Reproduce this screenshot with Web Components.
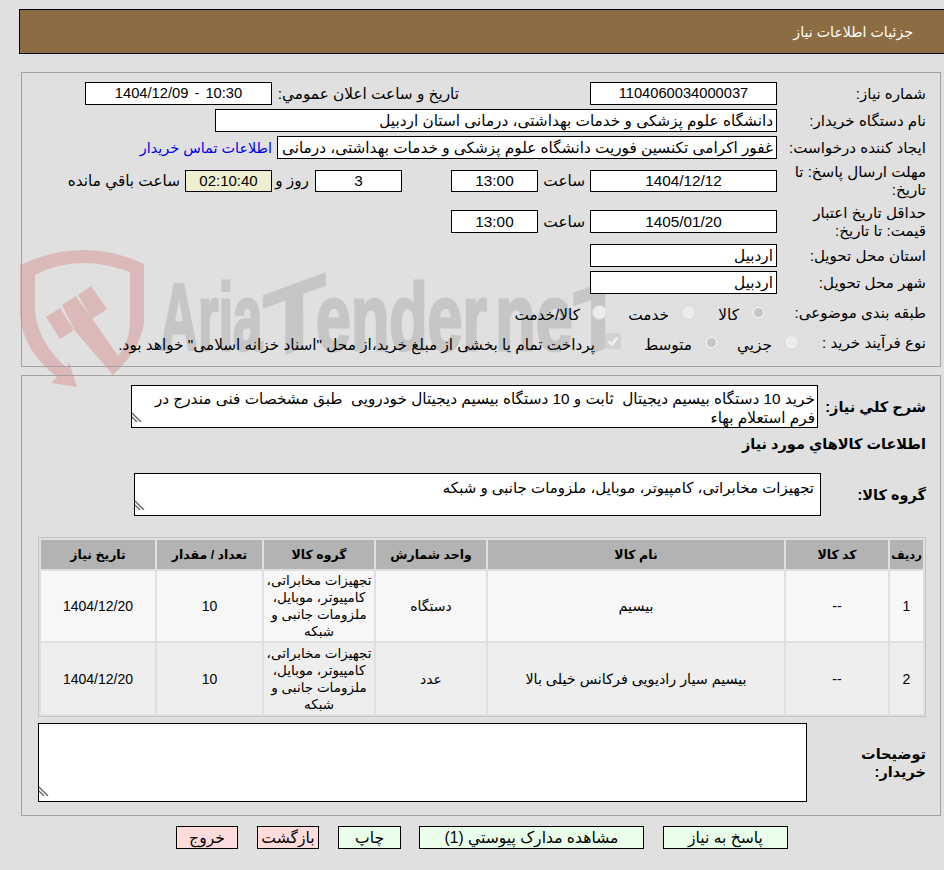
<!DOCTYPE html>
<html dir="rtl" lang="fa">
<head>
<meta charset="utf-8">
<title>جزئیات اطلاعات نیاز</title>
<style>
    html { margin: 0; padding: 0; background: #e0e0e0; overflow: hidden; }
    body { margin: 0; padding: 0; font-family: "Liberation Sans", "DejaVu Sans", sans-serif; font-size: 15.3px; color: #000; }
</style>
</head>
<body>
<tender-page>
    <tender-header>جزئیات اطلاعات نیاز</tender-header>

    <tender-panel style="--top:18px; --pad-bottom:11px">
        <tender-row label="شماره نیاز:" style="--h:23px; --gap:4px">
            <tender-field center style="--w:187px; --fs:14.7px">1104060034000037</tender-field>
            <tender-text style="margin-right:131px; width:187px">تاریخ و ساعت اعلان عمومي:</tender-text>
            <tender-field center style="--w:187px; --fs:14.7px; word-spacing:2px">10:30 - 1404/12/09</tender-field>
        </tender-row>
        <tender-row label="نام دستگاه خریدار:" style="--h:23px; --gap:4px">
            <tender-field style="--w:562px">دانشگاه علوم پزشکی و خدمات بهداشتی، درمانی استان اردبیل</tender-field>
        </tender-row>
        <tender-row label="ایجاد کننده درخواست:" style="--h:23px; --gap:6px">
            <tender-field style="--w:500px">غفور اکرامی تکنسین فوریت دانشگاه علوم پزشکی و خدمات بهداشتی، درمانی</tender-field>
            <tender-text style="margin-right:5px; color:#0000ee; font-size:14.4px">اطلاعات تماس خریدار</tender-text>
        </tender-row>
        <tender-row label="مهلت ارسال پاسخ: تا تاریخ:" style="--h:32px; --gap:8px">
            <tender-field center style="--w:187px; --fh:22px">1404/12/12</tender-field>
            <tender-text style="margin-right:5px; width:47px">ساعت</tender-text>
            <tender-field center style="--w:87px; --fh:22px">13:00</tender-field>
            <tender-text style="width:49px"></tender-text>
            <tender-field center style="--w:87px; --fh:22px">3</tender-field>
            <tender-text style="margin-right:6px; width:37px">روز و</tender-text>
            <tender-field center style="--w:87px; --fh:22px; --bg:#eeeed0; --fs:15px">02:10:40</tender-field>
            <tender-text style="margin-right:5px">ساعت باقي مانده</tender-text>
        </tender-row>
        <tender-row label="حداقل تاریخ اعتبار قیمت: تا تاریخ:" style="--h:33px; --gap:6px">
            <tender-field center style="--w:187px">1405/01/20</tender-field>
            <tender-text style="margin-right:5px; width:47px">ساعت</tender-text>
            <tender-field center style="--w:87px">13:00</tender-field>
        </tender-row>
        <tender-row label="استان محل تحویل:" style="--h:23px; --gap:4px">
            <tender-field style="--w:187px">اردبیل</tender-field>
        </tender-row>
        <tender-row label="شهر محل تحویل:" style="--h:23px; --gap:6px">
            <tender-field style="--w:187px">اردبیل</tender-field>
        </tender-row>
        <tender-row label="طبقه بندی موضوعی:" style="--h:25px; --gap:5px">
            <tender-choice checked style="--w:70px; margin-right:11px">کالا</tender-choice>
            <tender-choice style="--w:89px">خدمت</tender-choice>
            <tender-choice style="--w:90px">کالا/خدمت</tender-choice>
        </tender-row>
        <tender-row label="نوع فرآیند خرید :" style="--h:25px; --gap:0px; --label:127px">
            <tender-choice style="--w:80px">جزيي</tender-choice>
            <tender-choice checked style="--w:98px">متوسط</tender-choice>
            <tender-choice box>پرداخت تمام یا بخشی از مبلغ خرید،از محل "اسناد خزانه اسلامی" خواهد بود.</tender-choice>
        </tender-row>
    </tender-panel>

    <tender-panel style="--top:8px; --pad-bottom:13px">
        <tender-row strong label="شرح کلي نياز:" style="--h:43px; --gap:4px; --label:108px">
            <tender-note style="--w:687px; --nh:43px">خرید 10 دستگاه بیسیم دیجیتال&nbsp; ثابت و 10 دستگاه بیسیم دیجیتال خودرویی&nbsp; طبق مشخصات فنی مندرج در فرم استعلام بهاء</tender-note>
        </tender-row>
        <tender-row strong label="اطلاعات کالاهاي مورد نياز" style="--h:23px; --gap:18px; --label:400px"></tender-row>
        <tender-row strong label="گروه کالا:" style="--h:43px; --gap:21px; --label:105px">
            <tender-note inset style="--w:687px; --nh:43px; font-size:15px">تجهیزات مخابراتی، کامپیوتر، موبایل، ملزومات جانبی و شبکه</tender-note>
        </tender-row>
        <tender-table></tender-table>
        <tender-row strong label="توضیحات خریدار:" style="--h:79px; --gap:0px; --label:119px; margin-top:6px">
            <tender-note style="--w:769px; --nh:79px"></tender-note>
        </tender-row>
    </tender-panel>

    <tender-actions>
        <tender-button>پاسخ به نیاز</tender-button>
        <tender-button style="--w:225px">مشاهده مدارک پیوستي (1)</tender-button>
        <tender-button style="--w:63px; margin-right:-1px">چاپ</tender-button>
        <tender-button red style="--w:62px">بازگشت</tender-button>
        <tender-button red style="--w:62px">خروج</tender-button>
    </tender-actions>
</tender-page>

<script>
// base class: shadow root + style + markup
class TenderElement extends HTMLElement {
    constructor(){
        super();
        this.shadow = this.attachShadow({mode: "open"});
    }
    connectedCallback(){
        this.render();
    }
}

class TenderPage extends TenderElement {
    render(){
        this.shadow.innerHTML = `
        <style>
            :host { display: block; position: relative; width: 944px; height: 870px; overflow: hidden; padding-top: 9px; box-sizing: border-box; }
            svg { position: absolute; left: 0; top: 0; z-index: -1; }
            .word { font-family: "Liberation Sans", sans-serif; font-weight: 700; font-size: 94px; fill: #c6c6c6; stroke: #c6c6c6; stroke-width: 3px; }
        </style>
        <svg width="944" height="870" viewBox="0 0 944 870" direction="ltr">
            <path fill="#dcb9b9" fill-rule="evenodd" d="M20 265 Q52 250 83 250 Q115 250 144 264 L144 323 Q140 350 113 375 L108 368 Q131 345 130 320 L130 272 Q105 263 83 263 Q58 263 35 275 L35 313 Q40 345 67 368 L69 362 L77 387 L51 383 L57 377 Q22 350 20 313 Z"/>
            <path fill="#dcb9b9" d="M46 317 L60 308 L74 330 L60 339 Z M62 305 L76 296 L93 320 L121 360 L113 375 L75 331 Z M78 295 L91 286 L107 309 L92 319 Z"/>
            <text class="word" transform="translate(160 350) scale(.56 1)">Aria</text>
            <text class="word" transform="translate(294 350) skewY(-20) scale(1.08 1) translate(-28.5 0)">T</text>
            <text class="word" transform="translate(316 350) scale(.668 1)">ender</text>
            <text class="word" transform="translate(495 350) scale(.71 1)">ne</text>
            <text class="word" transform="translate(598 350) skewY(-20) scale(.85 1) translate(-28.5 0)">T</text>
        </svg>
        <slot></slot>`;
    }
}

class TenderHeader extends TenderElement {
    render(){
        this.shadow.innerHTML = `
        <style>
            :host { display: flex; align-items: center; box-sizing: border-box; height: 45px; margin-left: 19px; padding-right: 31px;
                background: #8c6c42; color: #fff; border: 1px solid #000; border-right: 0; font-size: 14.2px; }
        </style>
        <slot></slot>`;
    }
}

class TenderPanel extends TenderElement {
    render(){
        this.shadow.innerHTML = `
        <style>
            :host { display: flex; flex-direction: column; box-sizing: border-box; width: 920px; margin-right: 3px; margin-top: var(--top, 0);
                padding: 9px 0 var(--pad-bottom, 10px) 0; border: 1px solid #a0a0a0; }
        </style>
        <slot></slot>`;
    }
}

class TenderRow extends TenderElement {
    render(){
        const strong = this.hasAttribute("strong");
        this.shadow.innerHTML = `
        <style>
            :host { display: flex; align-items: center; height: var(--h, 23px); margin-bottom: var(--gap, 4px); padding-right: 14px; flex: none; }
            .label { box-sizing: border-box; flex: none; width: var(--label, 149px); padding-left: 5px; line-height: 18px;
                font-weight: ${strong ? 700 : 400}; font-size: ${strong ? "14.5px" : "15.1px"}; }
        </style>
        <div class="label">${this.getAttribute("label")}</div>
        <slot></slot>`;
    }
}

class TenderField extends TenderElement {
    render(){
        this.shadow.innerHTML = `
        <style>
            :host { display: block; box-sizing: border-box; flex: none; width: var(--w); height: var(--fh, 23px); margin-top: 0; font-size: var(--fs, 15.3px);
                padding: 0 3px; background: var(--bg, #fff); border: 1px solid #000; white-space: nowrap; overflow: hidden; text-align: ${this.hasAttribute("center") ? "center" : "right"}; }
            .in { line-height: calc(var(--fh, 23px) - 2px); display: block; }
        </style>
        <span class="in"><slot></slot></span>`;
    }
}

class TenderText extends TenderElement {
    render(){
        this.shadow.innerHTML = `
        <style>
            :host { display: block; flex: none; white-space: nowrap; }
        </style>
        <slot></slot>`;
    }
}

class TenderChoice extends TenderElement {
    render(){
        const box = this.hasAttribute("box");
        const on = this.hasAttribute("checked");
        const mark = box
            ? `<svg class="box" width="16" height="16" viewBox="0 0 16 16"><rect width="16" height="16" rx="2" fill="#d2d2d2"/><path d="M3.5 8.5 L6.8 11.5 L12.5 4.5" fill="none" stroke="#f2f2f2" stroke-width="2.4"/></svg>`
            : `<span class="radio ${on ? "on" : ""}"></span>`;
        this.shadow.innerHTML = `
        <style>
            :host { display: flex; align-items: center; flex: none; width: var(--w, auto); white-space: nowrap; }
            .radio { box-sizing: border-box; flex: none; width: 15px; height: 15px; border-radius: 50%; background: #ececec; border: 1px solid #d6d6d6; margin-top: -1px; position: relative; }
            .radio.on::after { content: ""; position: absolute; inset: 2px; border-radius: 50%; background: #c6c6c6; }
            .box { flex: none; margin-top: -3px; }
            .txt { margin-right: 12px; padding-top: 4px; }
            .txt.b { margin-right: 10px; }
        </style>
        ${mark}<span class="txt ${box ? "b" : ""}"><slot></slot></span>`;
    }
}

class TenderNote extends TenderElement {
    render(){
        const inset = this.hasAttribute("inset");
        this.shadow.innerHTML = `
        <style>
            :host { display: block; flex: none; }
            .note { box-sizing: border-box; width: var(--w); height: var(--nh); background: #fff; border: 1px solid #000; overflow: hidden; resize: both;
                padding: ${inset ? "4px 6px" : "3px 2px"}; line-height: 19px; }
            .note::-webkit-resizer { background: url("data:image/svg+xml,%3Csvg xmlns='http://www.w3.org/2000/svg' width='10' height='10'%3E%3Cpath d='M0 1L9 10M0 5L5 10' stroke='%23666' stroke-width='1.4'/%3E%3C/svg%3E") no-repeat; }
        </style>
        <div class="note"><slot></slot></div>`;
    }
}

const GROUP = "تجهیزات مخابراتی، کامپیوتر، موبایل، ملزومات جانبی و شبکه";
const ITEMS = [
    {row: "1", code: "--", name: "بیسیم", unit: "دستگاه", group: GROUP, count: "10", date: "1404/12/20"},
    {row: "2", code: "--", name: "بیسیم سیار رادیویی فرکانس خیلی بالا", unit: "عدد", group: GROUP, count: "10", date: "1404/12/20"},
];

class TenderTable extends TenderElement {
    render(){
        const rows = ITEMS.map((it, i) => `
            <tr class="r${i}">
                <td>${it.row}</td><td>${it.code}</td><td class="nm">${it.name}</td><td>${it.unit}</td>
                <td class="grp">${it.group}</td><td>${it.count}</td><td>${it.date}</td>
            </tr>`).join("");
        this.shadow.innerHTML = `
        <style>
            :host { display: block; margin-right: 14px; width: 888px; flex: none; }
            table { table-layout: fixed; width: 888px; border-collapse: separate; border-spacing: 2px; border: 1px solid #c4c4c4; }
            th, td { padding: 0; text-align: center; }
            th { height: 29px; background: #b3b3b3; font-size: 12.5px; font-weight: 700; }
            th:first-child { font-size: 11.5px; }
            td { font-size: 14px; }
            td.nm { font-size: 14.3px; }
            tr.r0 td { height: 70px; background: #f7f7f7; }
            tr.r1 td { height: 71px; background: #eeeeee; }
            td.grp { line-height: 17px; font-size: 13.5px; }
        </style>
        <table>
            <colgroup>
                <col style="width:33px"><col style="width:102px"><col style="width:296px"><col style="width:110px">
                <col style="width:110px"><col style="width:105px"><col style="width:114px">
            </colgroup>
            <thead><tr><th>ردیف</th><th>کد کالا</th><th>نام کالا</th><th>واحد شمارش</th><th>گروه کالا</th><th>تعداد / مقدار</th><th>تاریخ نیاز</th></tr></thead>
            <tbody>${rows}</tbody>
        </table>`;
    }
}

class TenderActions extends TenderElement {
    render(){
        this.shadow.innerHTML = `
        <style>
            :host { display: flex; gap: 19px; margin-top: 10px; padding-right: 156px; font-size: 15.6px; }
        </style>
        <slot></slot>`;
    }
}

class TenderButton extends TenderElement {
    render(){
        this.shadow.innerHTML = `
        <style>
            :host { display: block; box-sizing: border-box; flex: none; width: var(--w, 125px); height: 23px; line-height: 21px; text-align: center; white-space: nowrap; overflow: hidden;
                background: ${this.hasAttribute("red") ? "#ffdcdc" : "#eaffea"}; border: 1px solid #000; }
        </style>
        <slot></slot>`;
    }
}

customElements.define("tender-page", TenderPage);
customElements.define("tender-header", TenderHeader);
customElements.define("tender-panel", TenderPanel);
customElements.define("tender-row", TenderRow);
customElements.define("tender-field", TenderField);
customElements.define("tender-text", TenderText);
customElements.define("tender-choice", TenderChoice);
customElements.define("tender-note", TenderNote);
customElements.define("tender-table", TenderTable);
customElements.define("tender-actions", TenderActions);
customElements.define("tender-button", TenderButton);
</script>
</body>
</html>
